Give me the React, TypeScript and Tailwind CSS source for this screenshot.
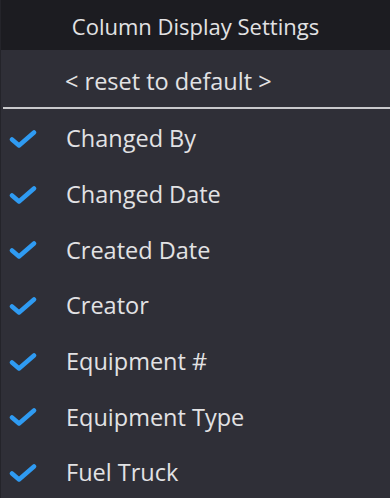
const columns = [
  "Changed By",
  "Changed Date",
  "Created Date",
  "Creator",
  "Equipment #",
  "Equipment Type",
  "Fuel Truck",
]

function Check() {
  return (
    <svg viewBox="0 0 28 18" className="h-[18px] w-[28px]">
      <path
        d="M3 9.5 L10 15.5 L25 2.5"
        fill="none"
        stroke="#2f9bf2"
        strokeWidth="4.5"
        strokeLinecap="round"
        strokeLinejoin="round"
      />
    </svg>
  )
}

export default function App() {
  return (
    <div className="w-[390px] h-[498px] overflow-hidden bg-[#2f2f37] border-l border-[#24242a] font-['Open_Sans',sans-serif] font-medium text-[#e2e2e4]">
      <div className="h-[50px] bg-[#1c1c21] flex items-center justify-center text-[22px] pt-[3px]">
        Column Display Settings
      </div>
      <div className="h-[57px] flex items-center pl-[64px] pt-[6px] text-[23.5px]">
        &lt; reset to default &gt;
      </div>
      <div className="ml-[2px] h-[2px] bg-[#c9c9cc]" />
      <div className="pt-[2px]">
        {columns.map((c) => (
          <div key={c} className="h-[55.7px] flex items-center">
            <div className="w-[65px] pl-[8px] flex items-center">
              <Check />
            </div>
            <span className="text-[23.5px]">{c}</span>
          </div>
        ))}
      </div>
    </div>
  )
}
